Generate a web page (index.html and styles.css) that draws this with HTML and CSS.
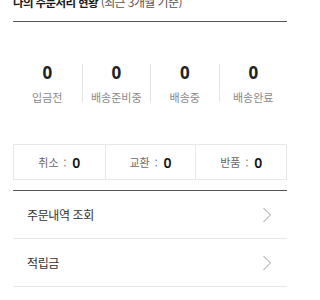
FILE: index.html
```html
<!DOCTYPE html>
<html lang="ko">
<head>
<meta charset="utf-8">
<link rel="stylesheet" href="styles.css">
</head>
<body>
<div class="page">
  <div class="title"><strong>나의 주문처리 현황</strong> <span class="sub">(최근 3개월 기준)</span></div>
  <div class="stats">
    <div class="stat"><div class="num">0</div><div class="label">입금전</div></div>
    <div class="stat"><div class="num">0</div><div class="label">배송준비중</div></div>
    <div class="stat"><div class="num">0</div><div class="label">배송중</div></div>
    <div class="stat"><div class="num">0</div><div class="label">배송완료</div></div>
  </div>
  <div class="cs">
    <div class="cell"><span class="k">취소</span><span class="colon">:</span><span class="v">0</span></div>
    <div class="cell"><span class="k">교환</span><span class="colon">:</span><span class="v">0</span></div>
    <div class="cell"><span class="k">반품</span><span class="colon">:</span><span class="v">0</span></div>
  </div>
  <div class="menu">
    <div class="row"><span>주문내역 조회</span><svg class="chev" width="10" height="16" viewBox="0 0 10 16"><path d="M1.5 1 L8.5 8 L1.5 15" fill="none" stroke="#9a9a9a" stroke-width="1"/></svg></div>
    <div class="row"><span>적립금</span><svg class="chev" width="10" height="16" viewBox="0 0 10 16"><path d="M1.5 1 L8.5 8 L1.5 15" fill="none" stroke="#9a9a9a" stroke-width="1"/></svg></div>
  </div>
</div>
</body>
</html>
```
FILE: styles.css
```css
html, body {
  margin: 0;
  padding: 0;
  background: #fff;
}
body {
  font-family: "Noto Sans CJK KR", "Noto Sans", sans-serif;
  color: #222;
  overflow: hidden;
}
.page {
  width: 274px;
  padding: 0 13px;
}
.title {
  margin-top: -5px;
  font-size: 11.5px;
  line-height: 14px;
  padding-bottom: 12px;
  border-bottom: 1px solid #555;
  letter-spacing: -0.6px;
  white-space: nowrap;
}
.title strong {
  font-weight: 700;
  color: #1a1a1a;
}
.title .sub {
  font-size: 12px;
  color: #555;
}
.stats {
  display: grid;
  grid-template-columns: repeat(4, 1fr);
  margin-top: 42px;
}
.stat {
  text-align: center;
  border-left: 1px solid #e3e3e3;
  height: 38px;
}
.stat:first-child {
  border-left: none;
}
.num {
  font-family: "Noto Sans", sans-serif;
  font-size: 17px;
  font-weight: 700;
  line-height: 17px;
  color: #222;
}
.label {
  margin-top: 10px;
  font-size: 11px;
  line-height: 12px;
  color: #888;
}
.cs {
  display: grid;
  grid-template-columns: repeat(3, 1fr);
  margin-top: 42px;
  border: 1px solid #e8e8e8;
}
.cell {
  height: 34px;
  display: flex;
  align-items: center;
  justify-content: center;
  border-left: 1px solid #e8e8e8;
}
.cell:first-child {
  border-left: none;
}
.k {
  font-size: 11px;
  color: #666;
}
.colon {
  font-size: 10px;
  color: #666;
  margin: 0 6px 0 5px;
}
.v {
  font-family: "Noto Sans", sans-serif;
  font-size: 14px;
  font-weight: 600;
  color: #111;
}
.menu {
  margin-top: 10px;
  border-top: 1px solid #555;
}
.row {
  height: 47px;
  display: flex;
  align-items: center;
  justify-content: space-between;
  padding: 0 15px 0 14px;
  border-bottom: 1px solid #e8e8e8;
  font-size: 12px;
  color: #333;
  letter-spacing: -0.4px;
}
.chev {
  display: block;
}
```
